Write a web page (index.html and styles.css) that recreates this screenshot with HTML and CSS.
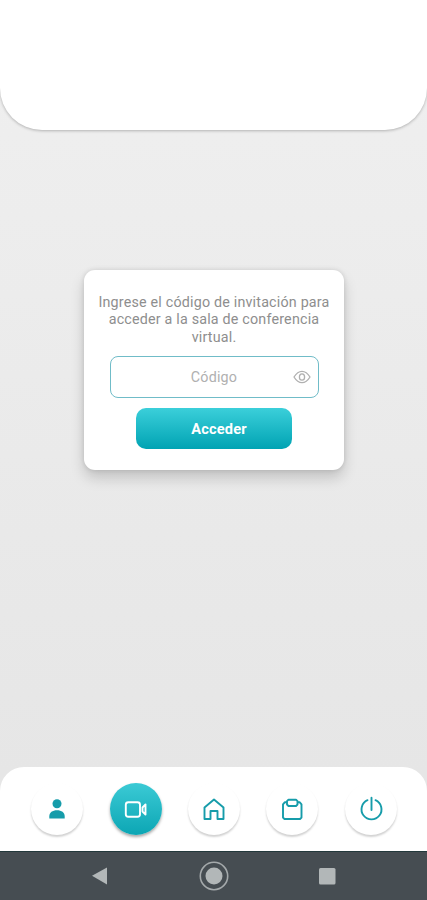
FILE: index.html
```html
<!DOCTYPE html>
<html lang="es">
<head>
<meta charset="utf-8">
<meta name="viewport" content="width=device-width, initial-scale=1">
<title>Acceder</title>
<link rel="stylesheet" href="styles.css">
</head>
<body>
<div class="screen">
  <header class="header"></header>
  <main class="main">
    <form class="card">
      <p class="message">Ingrese el código de invitación para<br>acceder a la sala de conferencia<br>virtual.</p>
      <div class="field">
        <span class="placeholder">Código</span>
        <svg class="eye" viewBox="0 0 18 14" width="18" height="14"><path d="M1 7Q4.500 1.300 9 1.300T17 7Q13.500 12.700 9 12.700T1 7Z"/><ellipse cx="9" cy="7" rx="2.600" ry="3.200"/></svg>
      </div>
      <button class="submit" type="button">Acceder</button>
    </form>
  </main>
  <nav class="tabs">
    <a class="tab"><svg viewBox="0 0 52 52"><g class="solid"><circle cx="26" cy="20.700" r="4.500"/><path d="M18.300 35.500V33.500C18.300 29.500 21.500 27.300 26 27.300S33.700 29.500 33.700 33.500V35.500Z"/></g></svg></a>
    <a class="tab active"><svg viewBox="0 0 52 52"><rect x="15.800" y="19.300" width="14.200" height="14.400" rx="2.500"/><path d="M35.500 21.500V31.500L32.500 28.500V24.500Z"/></svg></a>
    <a class="tab"><svg viewBox="0 0 52 52"><path d="M16.500 36V24.500L26 16.500L35.500 24.500V36H29.500V28H22.500V36Z"/></svg></a>
    <a class="tab"><svg viewBox="0 0 52 52"><path d="M21 19.300H18.700L17 21.300V34.500L18.500 36H34L35.500 34.500V21.300L33.800 19.300H31.500M22.500 16.700H30L31.500 18.200V21.500L30 23H22.500L21 21.500V18.200Z"/></svg></a>
    <a class="tab"><svg viewBox="0 0 52 52"><path d="M22.500 17.200A10 10 0 1 0 30.500 17.200M26.500 14.800V27"/></svg></a>
  </nav>
  <footer class="system">
    <svg viewBox="0 0 427 49" width="427" height="49"><path class="key" d="M92 24.700L107 16.500V33.500Z"/><circle class="ring" cx="214" cy="25" r="13.700"/><circle class="key" cx="214" cy="25" r="8.500"/><rect class="key" x="319" y="17" width="16.500" height="16.500" rx="1.500"/></svg>
  </footer>
</div>
</body>
</html>
```
FILE: styles.css
```css
* { box-sizing: border-box; }
body { margin: 0; font-family: Roboto, sans-serif; }
.screen {
  width: 427px;
  height: 900px;
  display: flex;
  flex-direction: column;
  overflow: hidden;
  background: linear-gradient(#f0f0f0, #eeeeee 15%, #e6e6e6 86%);
}
.header {
  height: 130px;
  flex: none;
  background: #fff;
  border-radius: 0 0 42px 42px;
  box-shadow: 0 1px 3px rgba(0, 0, 0, .25);
}
.main {
  flex: 1;
  display: flex;
  justify-content: center;
  align-items: flex-start;
  padding-top: 140px;
}
.card {
  width: 260px;
  height: 200px;
  margin-left: 1px;
  padding-top: 24px;
  display: flex;
  flex-direction: column;
  align-items: center;
  background: #fff;
  border-radius: 11px;
  box-shadow: 0 8px 14px rgba(0, 0, 0, .17), 0 0 5px rgba(0, 0, 0, .12);
}
.message {
  margin: 0 0 11px;
  height: 51px;
  font-size: 14.3px;
  line-height: 17.3px;
  letter-spacing: .19px;
  color: #8e8e8e;
  text-align: center;
  white-space: nowrap;
}
.field {
  position: relative;
  width: 209px;
  height: 42px;
  flex: none;
  display: flex;
  align-items: center;
  justify-content: center;
  border: 1px solid #70bcc8;
  border-radius: 8px;
}
.placeholder { font-size: 14.3px; letter-spacing: .19px; color: #b0b0b0; }
.eye {
  position: absolute;
  right: 7px;
  top: 13px;
  fill: none;
  stroke: #b0b0b0;
  stroke-width: 1.3;
}
.submit {
  width: 156px;
  height: 41px;
  flex: none;
  margin-top: 10px;
  padding: 0 0 0 10px;
  border: 0;
  border-radius: 10px;
  background: linear-gradient(#3bcfda, #00a3b3);
  color: #fff;
  font: bold 14.6px Roboto, sans-serif;
  letter-spacing: .2px;
}
.tabs {
  height: 84px;
  flex: none;
  display: flex;
  justify-content: center;
  gap: 26.3px;
  padding: 16px 0 0 1px;
  background: #fff;
  border-radius: 24px 24px 0 0;
}
.tab {
  width: 52px;
  height: 52px;
  border-radius: 50%;
  color: #169caa;
  background: #fff;
  box-shadow: 0 2px 2px rgba(0, 0, 0, .18);
}
.tab svg {
  display: block;
  width: 52px;
  height: 52px;
  fill: none;
  stroke: currentColor;
  stroke-width: 1.9;
  stroke-linejoin: round;
  stroke-linecap: round;
}
.tab .solid { fill: currentColor; stroke: none; }
.tab.active {
  color: #fff;
  background: linear-gradient(#3bcad5, #0ca6b4);
  box-shadow: 0 2px 3px rgba(0, 0, 0, .35);
}
.system {
  height: 49px;
  flex: none;
  background: #464d52;
  border-top: 1px solid #23393c;
}
.system svg { display: block; margin-top: -1px; }
.key { fill: #b2b7b8; }
.ring { fill: none; stroke: #a4a9ab; stroke-width: 1.6; }
```
